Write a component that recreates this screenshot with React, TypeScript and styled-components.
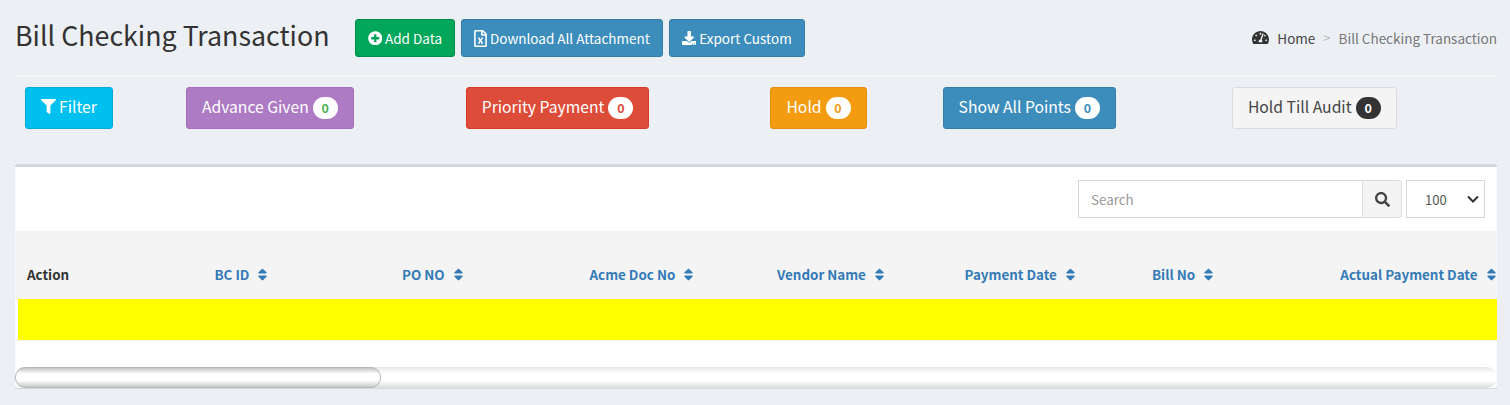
import React from 'react';
import styled, { createGlobalStyle } from 'styled-components';
import { FaDownload, FaFilter, FaPlusCircle, FaRegFileExcel, FaSearch, FaSort, FaTachometerAlt } from 'react-icons/fa';

const GlobalStyle = createGlobalStyle`
  html, body {
    margin: 0;
    padding: 0;
    background: #ecf0f5;
    overflow: hidden;
  }
  body {
    font-family: "Noto Sans CJK SC", "Noto Sans", sans-serif;
    color: #333;
  }
`;

const palette = {
  green: { bg: '#00a65a', border: '#008d4c', color: '#fff', badge: '#00a65a' },
  blue: { bg: '#3c8dbc', border: '#367fa9', color: '#fff', badge: '#3c8dbc' },
  cyan: { bg: '#00c0ef', border: '#00acd6', color: '#fff', badge: '#00c0ef' },
  purple: { bg: '#ad7ac4', border: '#a56fbd', color: '#fff', badge: '#4caf50' },
  red: { bg: '#dd4b39', border: '#d73925', color: '#fff', badge: '#dd4b39' },
  orange: { bg: '#f39c12', border: '#e08e0b', color: '#fff', badge: '#f39c12' },
  light: { bg: '#f4f4f4', border: '#ddd', color: '#444', badge: '#fff' },
};

type Tone = keyof typeof palette;

const Page = styled.div`
  width: 1510px;
  height: 405px;
  padding: 19px 13px 0 15px;
  box-sizing: border-box;
`;

const Header = styled.header`
  display: flex;
  align-items: center;
  height: 38px;
`;

const Title = styled.h1`
  flex: 0 0 314px;
  margin: 0 25px 6px 0;
  font-size: 26.8px;
  font-weight: 400;
  line-height: 32px;
  color: #333;
  white-space: nowrap;
`;

const ActionGroup = styled.div`
  display: flex;
  gap: 6px;
`;

const ActionButton = styled.button<{ $tone: Tone }>`
  display: flex;
  align-items: center;
  justify-content: center;
  gap: 3px;
  height: 38px;
  padding: 0 12px;
  border: 1px solid ${(p) => palette[p.$tone].border};
  border-radius: 3px;
  background: ${(p) => palette[p.$tone].bg};
  color: #fff;
  font-family: inherit;
  font-size: 13.5px;
  line-height: 20px;
  white-space: nowrap;
  svg {
    font-size: 14.5px;
  }
`;

const SheetIcon = styled(FaRegFileExcel)`
  && {
    font-size: 17px;
    margin: 0 -2px;
  }
`;

const Breadcrumb = styled.nav`
  display: flex;
  align-items: center;
  margin: 0 0 1px auto;
  font-size: 13.5px;
  color: #777;
  white-space: nowrap;
  svg {
    font-size: 17px;
    color: #333;
    margin-right: 8px;
  }
`;

const Home = styled.span`
  color: #444;
`;

const Crumb = styled.span`
  color: #bbb;
  margin: 0 8px;
  font-size: 13px;
`;

const Divider = styled.div`
  height: 2px;
  margin-top: 18px;
  background: #f4f4f4;
`;

const FilterRow = styled.div`
  display: flex;
  margin-top: 10px;
`;

const FilterButton = styled.button<{ $tone: Tone; $left: number }>`
  display: flex;
  align-items: center;
  justify-content: center;
  gap: 3px;
  height: 42px;
  margin-left: ${(p) => p.$left}px;
  padding: 0 15px 3px;
  border: 1px solid ${(p) => palette[p.$tone].border};
  border-radius: 3px;
  background: ${(p) => palette[p.$tone].bg};
  color: ${(p) => palette[p.$tone].color};
  font-family: inherit;
  font-size: 15.7px;
  line-height: 22px;
  white-space: nowrap;
  svg {
    font-size: 15px;
  }
`;

const Badge = styled.span<{ $tone: Tone }>`
  display: inline-block;
  width: 25px;
  height: 22px;
  margin: 3px 0 0 1px;
  border-radius: 11px;
  background: ${(p) => (p.$tone === 'light' ? '#333' : '#fff')};
  color: ${(p) => palette[p.$tone].badge};
  font-size: 12.5px;
  font-weight: 700;
  line-height: 22px;
  text-align: center;
`;

const Card = styled.section`
  margin-top: 35px;
  height: 224px;
  border-top: 3px solid #d2d6de;
  border-radius: 3px;
  background: #fff;
  box-shadow: 0 1px 1px rgba(0, 0, 0, 0.1);
  box-sizing: border-box;
  overflow: hidden;
`;

const Toolbar = styled.div`
  display: flex;
  justify-content: flex-end;
  gap: 4px;
  height: 64px;
  padding: 13px 12px 0 0;
  box-sizing: border-box;
`;

const SearchBox = styled.div`
  display: flex;
  width: 324px;
  height: 38px;
`;

const SearchInput = styled.div`
  flex: 1;
  padding-left: 12px;
  border: 1px solid #d2d6de;
  border-right: 0;
  color: #999;
  font-size: 13.4px;
  line-height: 36px;
`;

const SearchAddon = styled.div`
  display: flex;
  align-items: center;
  justify-content: center;
  width: 40px;
  box-sizing: border-box;
  border: 1px solid #ddd;
  border-radius: 0 3px 3px 0;
  background: #f4f4f4;
  color: #444;
  font-size: 15px;
`;

const PageSize = styled.div`
  display: flex;
  align-items: center;
  justify-content: space-between;
  width: 79px;
  height: 38px;
  padding: 0 4px 0 18px;
  border: 1px solid #d2d6de;
  box-sizing: border-box;
  color: #555;
  font-size: 13px;
`;

const HeadRow = styled.div`
  display: flex;
  height: 68px;
  background: #f4f4f4;
  overflow: hidden;
`;

const HeadCell = styled.div<{ $link?: boolean }>`
  flex: 0 0 187.5px;
  display: flex;
  align-items: center;
  gap: 6px;
  box-sizing: border-box;
  padding: 18px 0 0 12px;
  color: ${(p) => (p.$link ? '#337ab7' : '#333')};
  font-size: 13.4px;
  font-weight: 700;
  white-space: nowrap;
  svg {
    font-size: 15px;
  }
`;

const ActionCell = styled(HeadCell)`
  border-right: 1px solid #f1f1f1;
`;

const LastCell = styled(HeadCell)`
  flex: 0 0 169px;
  justify-content: flex-end;
  padding-left: 0;
  svg {
    margin-right: -2px;
  }
`;

const HighlightRow = styled.div`
  height: 41px;
  margin-left: 3px;
  background: #ff0;
`;

const EmptyRow = styled.div`
  height: 27px;
  border-top: 1px solid #f4f4f4;
  box-sizing: border-box;
`;

const ScrollTrack = styled.div`
  height: 21px;
  border-radius: 10px;
  background: linear-gradient(to bottom, #e6e6e6 0%, #fff 30%, #fff 65%, #dcdcdc 100%);
`;

const ScrollThumb = styled.div`
  width: 366px;
  height: 21px;
  box-sizing: border-box;
  border-radius: 10px;
  border: 1px solid #b5b5b5;
  background: linear-gradient(to bottom, #c4c4c4 0%, #fff 30%, #fff 65%, #c9c9c9 100%);
`;

const columns = ['BC ID', 'PO NO', 'Acme Doc No', 'Vendor Name', 'Payment Date', 'Bill No'];

const filters: { label: string; tone: Tone; left: number }[] = [
  { label: 'Advance Given', tone: 'purple', left: 73 },
  { label: 'Priority Payment', tone: 'red', left: 112 },
  { label: 'Hold', tone: 'orange', left: 121 },
  { label: 'Show All Points', tone: 'blue', left: 76 },
  { label: 'Hold Till Audit', tone: 'light', left: 116 },
];

const App: React.FC = () => {
  return (
    <Page>
      <GlobalStyle />
      <Header>
        <Title>Bill Checking Transaction</Title>
        <ActionGroup>
          <ActionButton $tone="green"><FaPlusCircle />Add Data</ActionButton>
          <ActionButton $tone="blue"><SheetIcon />Download All Attachment</ActionButton>
          <ActionButton $tone="blue"><FaDownload />Export Custom</ActionButton>
        </ActionGroup>
        <Breadcrumb>
          <FaTachometerAlt />
          <Home>Home</Home>
          <Crumb>&gt;</Crumb>
          Bill Checking Transaction
        </Breadcrumb>
      </Header>
      <Divider />
      <FilterRow>
        <FilterButton $tone="cyan" $left={10}><FaFilter />Filter</FilterButton>
        {filters.map((f) => (
          <FilterButton key={f.label} $tone={f.tone} $left={f.left}>
            {f.label}
            <Badge $tone={f.tone}>0</Badge>
          </FilterButton>
        ))}
      </FilterRow>
      <Card>
        <Toolbar>
          <SearchBox>
            <SearchInput>Search</SearchInput>
            <SearchAddon><FaSearch /></SearchAddon>
          </SearchBox>
          <PageSize>
            100
            <svg width="14" height="14" viewBox="0 0 14 14" fill="none" stroke="#333" strokeWidth="2">
              <path d="M2 4.5l5 5 5-5" />
            </svg>
          </PageSize>
        </Toolbar>
        <HeadRow>
          <ActionCell>Action</ActionCell>
          {columns.map((c) => (
            <HeadCell key={c} $link>{c}<FaSort /></HeadCell>
          ))}
          <LastCell $link>Actual Payment Date<FaSort /></LastCell>
        </HeadRow>
        <HighlightRow />
        <EmptyRow />
        <ScrollTrack>
          <ScrollThumb />
        </ScrollTrack>
      </Card>
    </Page>
  );
};

export default App;
